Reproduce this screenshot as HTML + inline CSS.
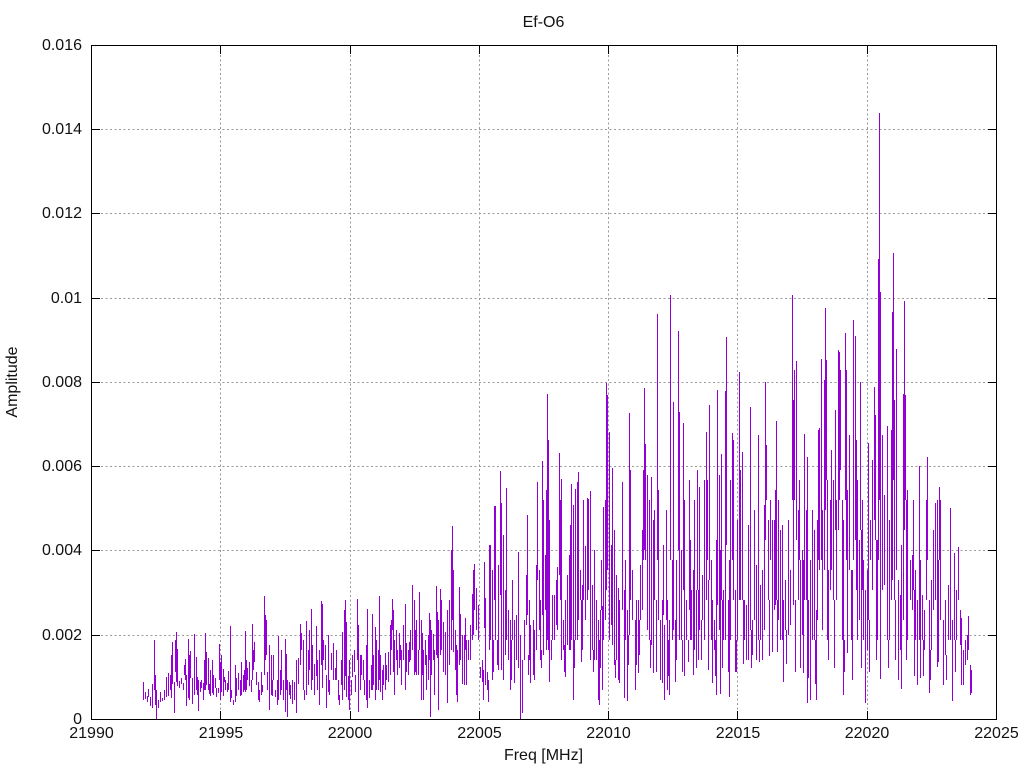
<!DOCTYPE html>
<html><head><meta charset="utf-8"><title>Ef-O6</title>
<style>html,body{margin:0;padding:0;background:#fff}svg{display:block}text{font-family:"Liberation Sans",Arial,sans-serif;font-size:16px;fill:#111}</style>
</head><body>
<svg width="1024" height="768" viewBox="0 0 1024 768" xmlns="http://www.w3.org/2000/svg">
<rect width="1024" height="768" fill="#fff"/>
<g stroke="#999" stroke-width="1" stroke-dasharray="2 2.5" fill="none">
<path d="M92 129.5H996M92 213.5H996M92 298.5H996M92 382.5H996M92 466.5H996M92 550.5H996M92 635.5H996"/>
<path d="M220.5 46V719M350.5 46V719M479.5 46V719M608.5 46V719M737.5 46V719M867.5 46V719"/>
</g>
<g transform="translate(.5 0)" stroke="#9400d3" stroke-width="1" fill="none">
<path d="M143 682V700M145 692V699M147 696V702M148 689V697M150 697V706M152 684V708M154 640V690M155 675V705M156 690V719M158 700V708M160 692V702M162 698V701M164 690V700M166 677V697M168 673V696M170 675V690M171 655V698M172 642V684M174 682V713M175 640V672M176 632V682M177 649V686M179 681V688M181 678V684M183 683V690M184 665V675M185 659V680M186 675V706M188 639V698M189 655V700M190 651V678M192 678V704M194 634V695M196 657V690M197 677V695M198 680V711M200 682V692M201 680V688M203 683V700M204 660V690M205 633V690M206 652V685M208 658V690M209 684V694M210 670V696M212 660V693M213 675V695M215 678V688M216 688V697M218 688V693M219 644V680M220 662V700M221 655V692M223 669V696M224 677V682M225 680V690M227 683V692M228 671V690M230 626V702M231 690V698M233 700V705M235 665V702M236 678V696M238 673V690M240 680V696M241 662V695M243 675V692M244 670V690M245 631V692M246 660V690M247 668V680M249 662V686M251 680V692M252 624V680M253 650V670M254 642V662M256 672V685M258 682V700M259 690V702M261 672V695M262 685V692M264 596V675M265 615V660M266 620V655M267 672V690M269 645V710M271 655V695M272 680V696M273 655V680M275 690V697M277 680V705M278 636V700M280 670V695M281 650V690M283 680V700M285 639V712M286 654V690M287 680V717M289 682V695M290 685V699M292 680V704M294 682V700M296 660V713M298 658V684M300 624V665M301 633V650M303 640V690M304 690V700M306 621V695"/>
<path d="M308 650V685M309 630V670M311 609V690M312 645V680M314 664V695M316 626V676M317 660V690M319 650V705M321 601V665M322 604V688M323 640V660M325 645V670M326 675V708M328 635V692M329 680V695M331 653V670M333 643V680M335 668V680M336 650V680M338 680V700M339 695V705M341 660V685M342 632V700M344 610V690M345 600V676M346 622V697M348 676V700M349 660V710M351 680V695M352 655V677M354 650V672M355 675V692M357 599V660M358 625V712M360 655V690M361 655V675M363 660V680M364 680V695M366 645V700M367 609V708M369 680V698M371 665V690M372 614V690M373 655V685M375 627V700M376 640V690M378 650V690M379 596V680M380 655V692M382 670V700M383 665V685M385 653V690M386 665V680M388 652V682M390 625V675M391 620V650M392 599V630M393 610V672M394 640V695M396 630V660M397 650V675M399 633V668M400 645V660M401 650V685M403 625V660M405 604V690M406 643V672M408 650V675M409 642V662M410 630V660M412 585V650M414 600V675M415 630V672M416 620V675M418 650V675M419 592V650M421 620V700M422 633V675M423 650V700M425 640V665M426 655V690M428 635V680M429 613V660"/>
<path d="M430 620V717M431 630V675M433 634V660M434 650V695M436 586V655M437 612V658M438 620V710M440 589V655M441 600V650M443 622V672M445 632V675M447 610V703M449 600V665M451 550V650M452 526V620M453 570V652M455 630V670M456 645V695M457 650V702M459 587V665M460 614V660M462 635V684M464 635V685M465 618V650M466 640V685M468 640V660M470 625V660M472 594V640M473 570V635M474 564V610M476 588V630M478 605V640"/>
<path d="M480 667V678M482 660V682M483 670V700M484 562V628M485 598V685M487 672V690M488 680V702M489 545V650M490 545V640M492 570V680M494 506V600M495 506V640M497 640V665M498 565V670M500 471V595M501 503V670M503 535V680M505 590V655M506 488V640M508 610V660M510 620V690M512 580V640M514 620V683M516 615V660M518 552V668M520 635V720M522 660V713M524 620V660M526 575V625M527 515V615M529 600V660M530 625V683M533 620V675M534 630V680M536 565V650M537 482V580M539 570V630M540 600V660M542 461V615M543 500V655M545 555V610M546 490V650M547 394V640M548 440V650M549 520V682M552 595V640M554 595V640M556 580V625M557 567V630M559 453V575M560 500V600M561 479V660M563 620V650M565 600V677M567 575V645M569 555V650M570 525V650M571 484V640M573 505V700M575 489V640M577 482V640M578 472V620M580 570V600M582 585V650M583 500V600M585 546V620M587 498V600M588 499V590M590 491V660M592 585V650M594 550V660M596 600V660M598 620V700M599 640V705M601 560V610M602 606V690M603 507V640M605 500V620M606 383V590M607 395V570M609 432V640M611 545V625M612 468V645M614 530V665M616 575V660M618 588V680M619 600V683M622 482V610M624 590V698M625 560V640M627 610V701M629 413V635M630 470V600M632 570V620M635 620V690M636 600V665M638 600V673M640 565V620M642 530V610M643 470V560M644 388V550M645 444V560M647 475V630M649 500V640"/>
<path d="M651 477V645M653 520V673M654 510V600M657 314V560M658 490V620M660 620V680M662 600V683M663 545V615M664 625V700M666 510V620M667 600V690M669 620V695M670 295V560M672 560V640M673 402V630M675 620V682M676 560V660M678 331V550M679 412V640M681 550V640M683 423V590M684 500V676M686 600V640M689 480V610M690 540V640M691 590V640M693 570V675M694 500V650M697 470V590M698 590V660M699 487V630"/>
<path d="M702 575V620M704 480V640M706 432V600M707 480V560M709 405V580M711 560V640M712 600V683M714 620V650M716 540V695M717 390V605M719 475V630M720 550V694M721 454V600M723 590V640M725 391V640M726 337V545M728 600V672M729 560V697M730 480V640M732 433V560M733 440V600M735 590V672M737 520V640M739 372V600M740 470V600M742 452V600M744 600V640M746 605V660M748 525V660M750 407V630M752 620V655M754 510V620M756 565V660M758 435V640M760 585V640M762 570V660M764 505V630M765 382V540M766 445V500M768 520V600M770 500V560M772 520V652M774 520V610M775 490V605M776 421V600M778 500V620M780 530V640M782 525V640M783 600V682M785 580V630M788 520V635M790 570V625M792 295V500M793 400V605M794 370V500M796 361V540M798 510V600M799 480V560M802 550V635M803 560V673M804 434V600M806 510V600M807 457V703M810 560V700M812 510V640M814 530V640M816 610V700M817 520V620M818 430V560M819 428V570M821 359V560M822 510V630M824 380V570M825 308V510M826 360V480M828 570V660M830 500V590M831 450V570M833 480V600M835 410V530M836 500V600M838 350V530M839 352V500M840 370V470M842 500V640M843 520V695M845 333V500M846 370V560M847 490V653M849 435V570M851 570V640M853 320V560M855 336V540M856 440V590M857 480V640M859 540V620M860 382V530M862 500V590M863 560V640M865 590V703M867 570V650M868 443V620M870 520V560M872 460V590M874 387V520M875 415V540M877 540V640M878 259V560M879 113V500M880 292V679M882 435V590M884 495V585M887 426V640M889 520V640M891 430V600M892 312V580M893 253V480M894 400V600M896 349V570M898 580V680M900 595V650M901 545V689M903 394V620M904 301V530M905 395V500M907 490V640M910 560V600M912 555V610M913 500V590M915 570V640M917 600V685M919 466V640M920 560V678M922 595V640M924 610V650M926 500V600M927 457V560M929 600V693M931 580V650M933 530V610M935 503V600M937 500V667M939 487V560M940 500V620M943 620V685M945 600V655M948 585V640M950 508V640M952 620V701M954 553V640M956 590V640M958 547V600M960 610V645M961 618V685M963 650V685M965 640V665M967 635V660M968 616V650M970 665V695M971 670V693"/>
<path d="M493 640V672M511 640V680M528 655V675M541 650V668M551 640V660M564 645V672M574 640V668M581 600V662M593 650V672M600 610V668M615 660V678M628 635V665M639 620V655M650 640V668M656 600V672M668 640V676M682 640V672M688 640V662M696 590V668M701 620V660M708 580V670M715 640V676M722 600V668M736 640V672M743 600V664M751 630V668M759 640V662M769 600V656M777 600V652M786 630V664M795 600V672M800 560V668M808 600V678M815 640V684M827 480V640M834 600V668M844 640V672M852 570V680M861 530V668M869 620V672M876 540V660M888 640V668M895 600V660M906 500V660M914 590V676M923 640V676M930 650V680M938 560V662M946 655V680M955 640V672"/>
</g>
<g stroke="#000" stroke-width="1" fill="none">
<rect x="91.5" y="45.5" width="905" height="674"/>
<path d="M92 129.5H100M988 129.5H996M92 213.5H100M988 213.5H996M92 298.5H100M988 298.5H996M92 382.5H100M988 382.5H996M92 466.5H100M988 466.5H996M92 550.5H100M988 550.5H996M92 635.5H100M988 635.5H996"/>
<path d="M220.5 46V54M220.5 711V719M350.5 46V54M350.5 711V719M479.5 46V54M479.5 711V719M608.5 46V54M608.5 711V719M737.5 46V54M737.5 711V719M867.5 46V54M867.5 711V719"/>
</g>
<g text-anchor="end">
<text x="82" y="50">0.016</text>
<text x="82" y="134">0.014</text>
<text x="82" y="218">0.012</text>
<text x="82" y="303">0.01</text>
<text x="82" y="387">0.008</text>
<text x="82" y="471">0.006</text>
<text x="82" y="555">0.004</text>
<text x="82" y="640">0.002</text>
<text x="82" y="724">0</text>
</g>
<g text-anchor="middle">
<text x="91.5" y="738">21990</text>
<text x="221" y="738">21995</text>
<text x="350" y="738">22000</text>
<text x="479.5" y="738">22005</text>
<text x="608.5" y="738">22010</text>
<text x="738" y="738">22015</text>
<text x="867" y="738">22020</text>
<text x="996.5" y="738">22025</text>
<text x="543.5" y="27">Ef-O6</text>
<text x="543.5" y="760">Freq [MHz]</text>
<text transform="translate(17 382) rotate(-90)">Amplitude</text>
</g>
</svg>
</body></html>
